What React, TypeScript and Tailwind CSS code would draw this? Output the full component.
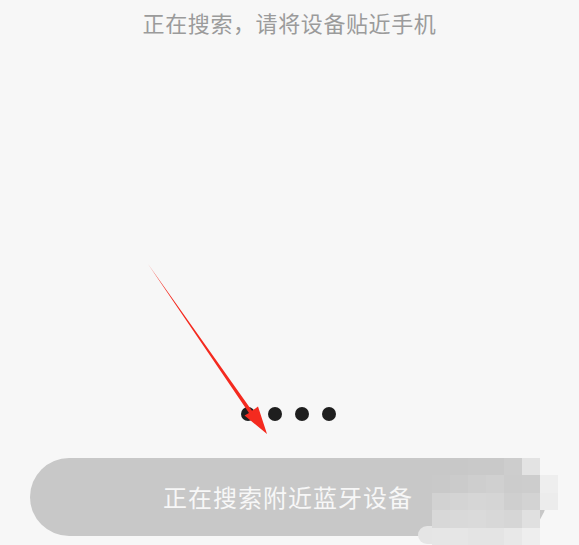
export default function App() {
  const cjk = { fontFamily: '"Noto Sans CJK SC", "Noto Sans", sans-serif' };
  // pixelated block over the right end of the button, 7 x 5 cells
  const mosaic = [
    "bg-[#c8c8c8]", "bg-[#c8c8c8]", "bg-[#c9c9c9]", "bg-[#c9c9c9]", "bg-[#cdcdcd]", "bg-[#e3e3e3]", "bg-transparent",
    "bg-[#c9c9c9]", "bg-[#cbcbcb]", "bg-[#cecece]", "bg-[#d0d0d0]", "bg-[#cccccc]", "bg-[#cdcdcd]", "bg-[#eeeeee]",
    "bg-[#d2d2d2]", "bg-[#d4d4d4]", "bg-[#d6d6d6]", "bg-[#d5d5d5]", "bg-[#cfcfcf]", "bg-[#d3d3d3]", "bg-[#ececec]",
    "bg-[#d8d8d8]", "bg-[#d9d9d9]", "bg-[#dadada]", "bg-[#d8d8d8]", "bg-[#d6d6d6]", "bg-[#e0e0e0]", "bg-transparent",
    "bg-[#e6e6e6]", "bg-[#e6e6e6]", "bg-[#e4e4e4]", "bg-[#e4e4e4]", "bg-[#e8e8e8]", "bg-[#eeeeee]", "bg-transparent",
  ];
  return (
    <div className="relative w-[579px] h-[545px] bg-[#f7f7f7] overflow-hidden flex flex-col items-center" style={cjk}>
      <div className="mt-[7px] text-[22px] leading-[30px] text-[#9b9b9b] tracking-[0.6px]">
        正在搜索，请将设备贴近手机
      </div>

      <div className="mt-[370px] flex gap-[13px] ml-[-3px]">
        <span className="w-[14px] h-[14px] rounded-full bg-[#1e1e1e]" />
        <span className="w-[14px] h-[14px] rounded-full bg-[#1e1e1e]" />
        <span className="w-[14px] h-[14px] rounded-full bg-[#1e1e1e]" />
        <span className="w-[14px] h-[14px] rounded-full bg-[#1e1e1e]" />
      </div>

      <div className="relative mt-[37px] w-[517px] h-[78px] ml-[-3px] rounded-full bg-[#c8c8c8] flex items-center justify-center">
        <span className="text-[24px] text-[#f7f7f7] tracking-[1px]">正在搜索附近蓝牙设备</span>
        <div className="absolute left-[388px] top-[68px] w-[40px] h-[18px] rounded-full bg-[#e5e5e5]" />
        <div className="absolute left-[402px] top-0 grid grid-cols-7 grid-rows-5 w-[126px] h-[87px]">
          {mosaic.map((c, i) => (
            <div key={i} className={c} />
          ))}
        </div>
      </div>

      <svg className="absolute left-0 top-0" width="579" height="545" viewBox="0 0 579 545">
        <polygon
          points="148,264 252,410.8 258,406.6 267,434 244.5,415.5 249,412.9"
          fill="#f42a1f"
        />
      </svg>
    </div>
  );
}
